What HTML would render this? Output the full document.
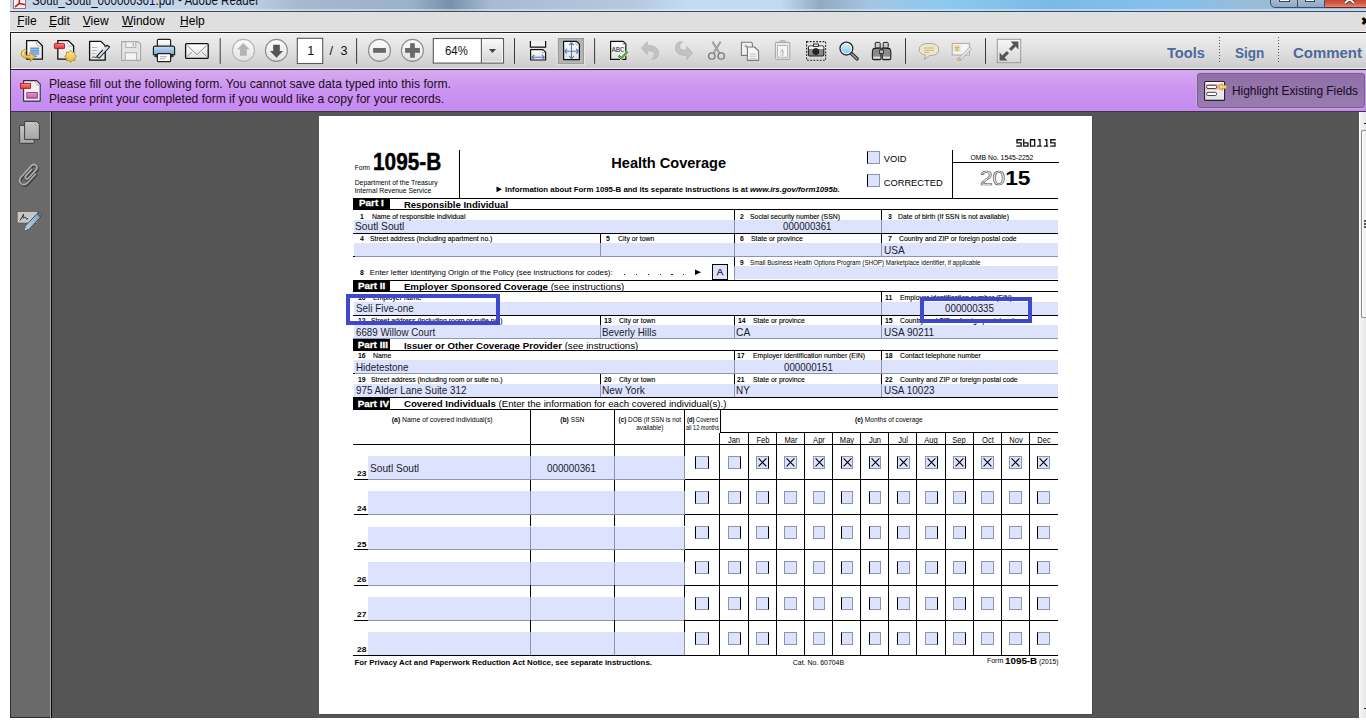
<!DOCTYPE html>
<html><head><meta charset="utf-8"><title>Adobe Reader</title>
<style>
html,body{margin:0;padding:0;width:1366px;height:728px;overflow:hidden;background:#fff;}
body{position:relative;font-family:"Liberation Sans",sans-serif;}
div{position:absolute;box-sizing:border-box;}
.t{white-space:nowrap;}
</style></head><body>
<div style="left:10.00px;top:0.00px;width:1356.00px;height:11.00px;background:linear-gradient(90deg,#c6d6e6 0px,#c4d4e4 230px,#a4b8ce 290px,#9cb2ca 400px,#7890ac 440px,#a6bad2 480px,#b4c8de 620px,#c4dcf2 680px,#c2daf0 770px,#94aac2 810px,#a4c4e2 860px,#8ccaee 930px,#7cbae6 1040px,#84c0ea 1160px,#98bcd8 1240px,#a0c0dc 1356px);"></div>
<div style="left:10.00px;top:9.00px;width:1356.00px;height:2.00px;background:rgba(225,240,252,0.55);"></div>
<div style="left:10.00px;top:11.00px;width:1356.00px;height:1.00px;background:#3b4a5c;"></div>
<div style="left:13.00px;top:0.00px;width:12.80px;height:8.80px;background:#f6f6f6;border:1px solid #a46a76;border-top:none;"></div>
<svg style="position:absolute;left:13px;top:0px;" width="13" height="9" viewBox="0 0 13 9"><path d="M6.5 -1 Q6.2 2.5 6.3 3.4 Q4 5.2 2.4 6.6 M6.3 3.4 Q9 3.8 11.4 4.4" stroke="#c8101a" stroke-width="1.5" fill="none" stroke-linecap="round"/></svg>
<div class="t" style="left:31.50px;top:-7.75px;font-size:15px;line-height:15px;font-weight:normal;font-style:normal;color:#0a1530;font-family:'Liberation Sans',sans-serif;transform:scaleX(0.7710);transform-origin:left top;">Soutl_Soutl_000000361.pdf - Adobe Reader</div>
<div style="left:1270.00px;top:-3.00px;width:28.40px;height:10.60px;background:linear-gradient(#a8bed4,#8eaac6);border:1px solid #3e4e60;border-radius:0 0 0 5px;"></div>
<div style="left:1298.40px;top:-3.00px;width:26.60px;height:10.60px;background:linear-gradient(#a8bed4,#8eaac6);border:1px solid #3e4e60;border-left:none;"></div>
<div style="left:1325.00px;top:-3.00px;width:45.00px;height:10.60px;background:linear-gradient(#c03828,#d45a44 60%,#e08a78);border:1px solid #6a2218;border-left:none;"></div>
<div style="left:1279.40px;top:-2.00px;width:10.80px;height:4.40px;background:#f4f4f4;border:1px solid #3a4450;"></div>
<div style="left:1305.20px;top:-2.00px;width:9.60px;height:4.20px;background:#f4f4f4;border:1px solid #3a4450;"></div>
<svg style="position:absolute;left:1344px;top:0px;" width="12" height="7" viewBox="0 0 12 7"><path d="M1 -5 L10 3 M10 -5 L1 3" stroke="#40302a" stroke-width="3.6"/><path d="M1 -5 L10 3 M10 -5 L1 3" stroke="#fff" stroke-width="2"/></svg>
<div style="left:10.00px;top:12.00px;width:1356.00px;height:20.00px;background:#dfdfdf;"></div>
<div class="t" style="left:17.30px;top:14.60px;font-size:12px;line-height:12px;font-weight:normal;font-style:normal;color:#000;font-family:'Liberation Sans',sans-serif;">File</div>
<div class="t" style="left:49.20px;top:14.60px;font-size:12px;line-height:12px;font-weight:normal;font-style:normal;color:#000;font-family:'Liberation Sans',sans-serif;">Edit</div>
<div class="t" style="left:82.80px;top:14.60px;font-size:12px;line-height:12px;font-weight:normal;font-style:normal;color:#000;font-family:'Liberation Sans',sans-serif;">View</div>
<div class="t" style="left:121.90px;top:14.60px;font-size:12px;line-height:12px;font-weight:normal;font-style:normal;color:#000;font-family:'Liberation Sans',sans-serif;">Window</div>
<div class="t" style="left:180.10px;top:14.60px;font-size:12px;line-height:12px;font-weight:normal;font-style:normal;color:#000;font-family:'Liberation Sans',sans-serif;">Help</div>
<div style="left:17.30px;top:25.80px;width:6.50px;height:1.00px;background:#000;"></div>
<div style="left:49.20px;top:25.80px;width:7.00px;height:1.00px;background:#000;"></div>
<div style="left:82.80px;top:25.80px;width:7.50px;height:1.00px;background:#000;"></div>
<div style="left:121.90px;top:25.80px;width:11.00px;height:1.00px;background:#000;"></div>
<div style="left:180.10px;top:25.80px;width:8.00px;height:1.00px;background:#000;"></div>
<div class="t" style="left:1360.50px;top:15.65px;font-size:11px;line-height:11px;font-weight:bold;font-style:normal;color:#000;font-family:'Liberation Sans',sans-serif;">&#10006;</div>
<div style="left:10.00px;top:31.00px;width:1356.00px;height:1.00px;background:#f4f4f4;"></div>
<div style="left:10.00px;top:32.00px;width:1356.00px;height:1.00px;background:#202020;"></div>
<div style="left:10.00px;top:33.00px;width:1356.00px;height:1.00px;background:#fbfbfb;"></div>
<div style="left:10.00px;top:34.00px;width:1356.00px;height:34.00px;background:linear-gradient(#eeeeee 0%,#e2e2e2 45%,#cdcdcd 100%);"></div>
<div style="left:10.00px;top:68.00px;width:1356.00px;height:1.00px;background:#f2f2f2;"></div>
<div style="left:10.00px;top:32.00px;width:1.00px;height:37.00px;background:#202020;"></div>
<div style="left:10.00px;top:69.00px;width:1356.00px;height:1.00px;background:#202020;"></div>
<div style="left:10.00px;top:70.00px;width:1356.00px;height:41.00px;background:linear-gradient(#d7a9ef 0%,#cb93f1 50%,#c58af2 100%);"></div>
<div style="left:10.00px;top:70.00px;width:1.00px;height:41.00px;background:#3a3a3a;"></div>
<div style="left:10.00px;top:111.00px;width:1356.00px;height:1.00px;background:#3e3a40;"></div>
<div style="left:10.00px;top:112.00px;width:41.00px;height:606.00px;background:#6a6a6a;border-left:1px solid #2e2e2e;border-bottom:1px solid #2e2e2e;"></div>
<div style="left:50.00px;top:112.00px;width:1.00px;height:606.00px;background:#a4a4a4;"></div>
<div style="left:51.00px;top:112.00px;width:1.00px;height:606.00px;background:#0a0a0a;"></div>
<div style="left:52.00px;top:112.00px;width:1307.00px;height:606.00px;background:#555555;"></div>
<div style="left:52.00px;top:717.00px;width:1307.00px;height:1.00px;background:#505050;"></div>
<div style="left:319.00px;top:116.00px;width:773.00px;height:598.00px;background:#ffffff;"></div>
<div style="left:1092.00px;top:117.00px;width:1.00px;height:598.00px;background:#4a4a4a;"></div>
<div style="left:320.00px;top:714.00px;width:773.00px;height:1.00px;background:#4a4a4a;"></div>
<div style="left:1359.00px;top:112.00px;width:7.00px;height:606.00px;background:linear-gradient(90deg,#f4f4f4,#e8e8e8);border-left:1px solid #ffffff;"></div>
<div style="left:1361.00px;top:130.00px;width:5.00px;height:188.00px;background:linear-gradient(90deg,#fdfdfd,#ececec);border:1px solid #8c8c8c;border-right:none;border-radius:2px 0 0 2px;"></div>
<div style="left:1364.00px;top:123.00px;width:2.00px;height:1.00px;background:#222;"></div>
<div style="left:1364.00px;top:708.00px;width:2.00px;height:1.00px;background:#222;"></div>
<div style="left:1363.80px;top:220.20px;width:2.20px;height:1.60px;background:#505050;"></div>
<div style="left:1363.80px;top:223.20px;width:2.20px;height:1.60px;background:#505050;"></div>
<div style="left:1363.80px;top:226.20px;width:2.20px;height:1.60px;background:#505050;"></div>
<svg style="position:absolute;left:0px;top:70px;" width="60" height="42" viewBox="0 0 60 42"><defs><linearGradient id="gr2" x1="0" y1="0" x2="0" y2="1"><stop offset="0" stop-color="#ff8a8a"/><stop offset="1" stop-color="#e23a3a"/></linearGradient>
<linearGradient id="gm2" x1="0" y1="0" x2="0" y2="1"><stop offset="0" stop-color="#e89ad6"/><stop offset="1" stop-color="#c65aae"/></linearGradient></defs>
<path d="M23.6 10.6 H36.6 L40.2 14.2 V31.1 H23.6 Z" fill="#f2f2f2" stroke="#35283f" stroke-width="1.1" stroke-linejoin="round"/>
<path d="M35.4 11.4 Q36 14 37 14.6 Q38.6 15.2 39.6 15.2" fill="none" stroke="#999" stroke-width="0.8"/>
<rect x="20.6" y="13.4" width="9.8" height="5" fill="url(#gr2)" stroke="#b01818" stroke-width="0.9"/>
<rect x="26.8" y="22.6" width="10.6" height="5.6" fill="url(#gm2)" stroke="#943476" stroke-width="0.9"/></svg>
<div class="t" style="left:49.00px;top:78.12px;font-size:12.1px;line-height:12.1px;font-weight:normal;font-style:normal;color:#1c0c24;font-family:'Liberation Sans',sans-serif;transform:scaleX(1.0016);transform-origin:left top;">Please fill out the following form. You cannot save data typed into this form.</div>
<div class="t" style="left:49.00px;top:92.72px;font-size:12.1px;line-height:12.1px;font-weight:normal;font-style:normal;color:#1c0c24;font-family:'Liberation Sans',sans-serif;transform:scaleX(0.9960);transform-origin:left top;">Please print your completed form if you would like a copy for your records.</div>
<div style="left:1196.30px;top:72.30px;width:169.70px;height:37.20px;background:linear-gradient(#8e6fa6,#9a7cb2);border:1px solid #c9a8e0;border-radius:4px;box-shadow:inset 0 0 0 1px #7c5c96;"></div>
<svg style="position:absolute;left:1200px;top:78px;" width="32" height="26" viewBox="0 0 32 26"><defs><linearGradient id="gh" x1="0" y1="0" x2="0" y2="1"><stop offset="0" stop-color="#fafafa"/><stop offset="1" stop-color="#e2e2e2"/></linearGradient>
<linearGradient id="ggold2" x1="0" y1="0" x2="0" y2="1"><stop offset="0" stop-color="#fff4b0"/><stop offset="1" stop-color="#e8b83a"/></linearGradient></defs>
<rect x="4.6" y="3.5" width="20" height="18.9" rx="1" fill="url(#gh)" stroke="#2a2030" stroke-width="1.1"/>
<rect x="5.2" y="6" width="17.2" height="5.8" fill="#f4b4b4"/>
<rect x="6.6" y="7.3" width="10" height="3.2" rx="1.4" fill="#fff" stroke="#333" stroke-width="0.9"/>
<rect x="6.6" y="14.3" width="10" height="3.2" rx="1.4" fill="#fff" stroke="#333" stroke-width="0.9"/>
<path d="M18.4 8.9 L22.2 5.4 V7.4 H26.6 V10.6 H22.2 V12.6 Z" fill="url(#ggold2)" stroke="#c08a20" stroke-width="0.8" stroke-linejoin="round"/></svg>
<div class="t" style="left:1231.60px;top:84.72px;font-size:12.1px;line-height:12.1px;font-weight:normal;font-style:normal;color:#140a1c;font-family:'Liberation Sans',sans-serif;transform:scaleX(0.9814);transform-origin:left top;">Highlight Existing Fields</div>
<svg style="position:absolute;left:10px;top:112px;" width="41" height="120" viewBox="0 0 41 120"><defs><linearGradient id="gn" x1="0" y1="0" x2="0" y2="1"><stop offset="0" stop-color="#c4c4c4"/><stop offset="1" stop-color="#a6a6a6"/></linearGradient>
<linearGradient id="gpen" x1="0" y1="0" x2="1" y2="0"><stop offset="0" stop-color="#bcd4e4"/><stop offset="1" stop-color="#7e9eb6"/></linearGradient></defs>
<rect x="9.6" y="13.4" width="14.6" height="18" rx="0.8" fill="url(#gn)" stroke="#3e3e3e" stroke-width="1"/>
<path d="M14.6 9.4 H26.4 L29.4 12.4 V27.4 H14.6 Z" fill="url(#gn)" stroke="#3e3e3e" stroke-width="1" stroke-linejoin="round"/>
<path d="M25.8 9.8 V13 H29" fill="#ddd" stroke="#888" stroke-width="0.6"/>
<g transform="translate(14.6,69.3) rotate(-47.6)"><path d="M12.5 4.3 L0 4.3 A4.3 4.3 0 0 1 0 -4.3 L16 -4.3 A3.1 3.1 0 0 1 16 1.9 L4.6 1.9 A1.8 1.8 0 0 1 4.6 -1.7 L13.4 -1.7" fill="none" stroke="#333" stroke-width="2.6" stroke-linecap="round" stroke-linejoin="round" opacity="0.8"/></g><g transform="translate(13.9,68.4) rotate(-47.6)"><path d="M12.5 4.3 L0 4.3 A4.3 4.3 0 0 1 0 -4.3 L16 -4.3 A3.1 3.1 0 0 1 16 1.9 L4.6 1.9 A1.8 1.8 0 0 1 4.6 -1.7 L13.4 -1.7" fill="none" stroke="#ababab" stroke-width="1.7" stroke-linecap="round" stroke-linejoin="round"/></g>
<rect x="7.2" y="99.6" width="20.4" height="11.4" fill="#c6c6c6" stroke="#555" stroke-width="0.6"/>
<path d="M10 108.4 Q12 106 13.4 102.6 Q14 101 13.2 103.6 Q12.4 107.4 14.6 105.4 Q15.6 104.4 16 106.4 Q16.4 107.6 18 106.6" fill="none" stroke="#222" stroke-width="1"/>
<path d="M14.8 114.6 L27.2 101.6 L30.8 105 L18.4 118 Z" fill="url(#gpen)" stroke="#3a4a5a" stroke-width="0.9"/>
<path d="M27.6 102.2 L29.4 100.2 L32.2 102.8 L30.4 104.8 Z" fill="#5a7a9a" stroke="#3a4a5a" stroke-width="0.8"/>
<path d="M15.4 115 L14.2 118.6 L18.2 117.4" fill="#eee" stroke="#555" stroke-width="0.7"/></svg>
<svg style="position:absolute;left:0;top:0" width="1366" height="70" viewBox="0 0 1366 70"><defs>
<linearGradient id="gPage" x1="0" y1="0" x2="0" y2="1"><stop offset="0" stop-color="#ffffff"/><stop offset="1" stop-color="#e2e2e2"/></linearGradient>
<linearGradient id="gCirc" x1="0" y1="0" x2="0" y2="1"><stop offset="0" stop-color="#fdfdfd"/><stop offset="1" stop-color="#e0e0e0"/></linearGradient>
<linearGradient id="gGold" x1="0" y1="0" x2="0" y2="1"><stop offset="0" stop-color="#fff0a0"/><stop offset="1" stop-color="#e0b030"/></linearGradient>
<linearGradient id="gRed" x1="0" y1="0" x2="0" y2="1"><stop offset="0" stop-color="#ff8080"/><stop offset="1" stop-color="#e03030"/></linearGradient>
<linearGradient id="gBlueP" x1="0" y1="0" x2="0" y2="1"><stop offset="0" stop-color="#c8def2"/><stop offset="1" stop-color="#7aa6d6"/></linearGradient>
<linearGradient id="gBtn" x1="0" y1="0" x2="0" y2="1"><stop offset="0" stop-color="#f8f8f8"/><stop offset="1" stop-color="#d6d6d6"/></linearGradient>
<linearGradient id="gLens" x1="0" y1="0" x2="0" y2="1"><stop offset="0" stop-color="#e6f6fb"/><stop offset="1" stop-color="#78c8e6"/></linearGradient>
</defs><path d="M26.6 40.6 H37.2 L42.4 45.8 V59.2 H26.6 Z" fill="url(#gPage)" stroke="#111" stroke-width="1.3" stroke-linejoin="round"/><path d="M35.8 41.5 Q36.5 45 37.5 45.5 Q40 46.5 41.6 46.5" fill="none" stroke="#aaa" stroke-width="0.9"/><line x1="30.2" y1="48.2" x2="39.2" y2="48.2" stroke="#2a78d6" stroke-width="1.1"/><line x1="30.2" y1="50.1" x2="39.2" y2="50.1" stroke="#2a78d6" stroke-width="1.1"/><line x1="30.2" y1="52.0" x2="39.2" y2="52.0" stroke="#2a78d6" stroke-width="1.1"/><line x1="30.2" y1="54.0" x2="39.2" y2="54.0" stroke="#2a78d6" stroke-width="1.1"/><line x1="33" y1="56.2" x2="37" y2="56.2" stroke="#2a78d6" stroke-width="1.1"/><path d="M25.2 49.2 Q20.5 51 21 54.5 Q22 58.5 30 58.2 L30.4 61.5 L35 56.4 L29.6 52.6 L29.8 55.6 Q24.8 55.8 24.6 53.4 Q24.8 51.6 26.4 50.6 Z" fill="url(#gGold)" stroke="#b8862a" stroke-width="0.9" stroke-linejoin="round"/><path d="M57.8 40.6 H68.4 L73.6 45.8 V59.2 H57.8 Z" fill="url(#gPage)" stroke="#111" stroke-width="1.3" stroke-linejoin="round"/><path d="M67 41.5 Q67.7 45 68.7 45.5 Q71.2 46.5 72.8 46.5" fill="none" stroke="#aaa" stroke-width="0.9"/><rect x="54.4" y="43.4" width="10.2" height="5.2" rx="0.8" fill="url(#gRed)" stroke="#9a1a1a" stroke-width="0.9"/><polygon points="70.60,50.20 72.21,52.52 74.98,52.02 74.48,54.79 76.80,56.40 74.48,58.01 74.98,60.78 72.21,60.28 70.60,62.60 68.99,60.28 66.22,60.78 66.72,58.01 64.40,56.40 66.72,54.79 66.22,52.02 68.99,52.52" fill="url(#gGold)" stroke="#b8862a" stroke-width="0.8"/><path d="M89.6 41.4 H101 L105.2 45.6 V60.2 H89.6 Z" fill="url(#gPage)" stroke="#111" stroke-width="1.3" stroke-linejoin="round"/><line x1="92" y1="47.5" x2="97.5" y2="47.5" stroke="#aaa" stroke-width="0.8"/><line x1="92" y1="50.5" x2="97.5" y2="50.5" stroke="#aaa" stroke-width="0.8"/><line x1="92" y1="53.5" x2="95.5" y2="53.5" stroke="#aaa" stroke-width="0.8"/><path d="M92 57.6 Q94 56 95 57.4 Q97 57.8 98 57" fill="none" stroke="#333" stroke-width="0.8"/><path d="M98.2 57.4 L96.8 56.4 L107.2 45.2 L109.6 47 L99.4 58 Z" fill="#cfe2f4" stroke="#1a1a1a" stroke-width="1.1" stroke-linejoin="round"/><line x1="102.8" y1="50" x2="105.6" y2="46.8" stroke="#fff" stroke-width="1.2"/><path d="M121.6 41.6 H138.2 L140.6 44 V60.4 H121.6 Z" fill="#e4e4e4" stroke="#a8a8a8" stroke-width="1.1" stroke-linejoin="round"/><rect x="125.8" y="41.8" width="10" height="5.6" fill="#f2f2f2" stroke="#a8a8a8" stroke-width="0.9"/><rect x="132.6" y="42.6" width="1.4" height="3.8" fill="#b0b0b0"/><rect x="125.2" y="52.8" width="11.4" height="7.4" fill="#f4f4f4" stroke="#aaa" stroke-width="0.9"/><rect x="157.4" y="39.4" width="13.2" height="8.6" rx="1" fill="url(#gPage)" stroke="#222" stroke-width="1.2"/><path d="M155.2 46.2 H172.8 Q174.6 46.2 174.6 48 V54.6 H153.4 V48 Q153.4 46.2 155.2 46.2 Z" fill="url(#gBlueP)" stroke="#222" stroke-width="1.2"/><rect x="154.4" y="54.4" width="19.2" height="2.8" rx="0.8" fill="#333"/><rect x="157.4" y="53.6" width="13.2" height="8" rx="0.8" fill="#fdfdfd" stroke="#222" stroke-width="1.2"/><line x1="160" y1="56.6" x2="167" y2="56.6" stroke="#999" stroke-width="0.8"/><line x1="160" y1="58.6" x2="165.4" y2="58.6" stroke="#999" stroke-width="0.8"/><rect x="185.6" y="43.6" width="22.6" height="14.8" rx="1" fill="url(#gPage)" stroke="#111" stroke-width="1.3"/><path d="M187.2 45.6 L197 54.6 L206.6 45.6 M187.2 56.4 L191.8 52.2 M206.6 56.4 L202 52.2" fill="none" stroke="#777" stroke-width="0.8"/><line x1="220.2" y1="38.2" x2="220.2" y2="63.8" stroke="#3a3a3a" stroke-width="1"/><line x1="356.6" y1="38.2" x2="356.6" y2="63.8" stroke="#3a3a3a" stroke-width="1"/><line x1="514.5" y1="38.2" x2="514.5" y2="63.8" stroke="#3a3a3a" stroke-width="1"/><line x1="594.6" y1="38.2" x2="594.6" y2="63.8" stroke="#3a3a3a" stroke-width="1"/><line x1="905.5" y1="38.2" x2="905.5" y2="63.8" stroke="#3a3a3a" stroke-width="1"/><line x1="985.5" y1="38.2" x2="985.5" y2="63.8" stroke="#3a3a3a" stroke-width="1"/><circle cx="243.5" cy="50.4" r="11" fill="url(#gCirc)" stroke="#b4b4b4" stroke-width="1.1"/><path d="M243.3 43 L249.8 49.6 H246.8 V55.8 H240 V49.6 H237 Z" fill="#b4b4b4"/><circle cx="276.4" cy="50.4" r="11" fill="url(#gCirc)" stroke="#8c8c8c" stroke-width="1.1"/><path d="M273.2 44.8 H279.8 V51.1 H283 L276.5 57.8 L269.9 51.1 H273.2 Z" fill="#555"/><rect x="297.3" y="38.3" width="25.4" height="25.2" fill="#fff" stroke="#5a5a5a" stroke-width="1.1"/><circle cx="379.5" cy="50.4" r="11" fill="url(#gCirc)" stroke="#8c8c8c" stroke-width="1.1"/><rect x="373.1" y="48" width="12.8" height="4.8" fill="#686868"/><circle cx="412.4" cy="50.4" r="11" fill="url(#gCirc)" stroke="#8c8c8c" stroke-width="1.1"/><rect x="405.1" y="48" width="14.8" height="4.8" fill="#686868"/><rect x="410.1" y="43.2" width="4.7" height="14.5" fill="#686868"/><rect x="433.3" y="38.5" width="70.2" height="24.6" fill="#fff" stroke="#5a5a5a" stroke-width="1.1"/><rect x="482.2" y="40" width="19.8" height="21.6" fill="url(#gBtn)"/><line x1="481.4" y1="38.5" x2="481.4" y2="63.1" stroke="#5a5a5a" stroke-width="1.1"/><path d="M488.9 49.1 H496.1 L492.5 53 Z" fill="#444"/><path d="M530.4 40.9 V47.2 H545.6 V40.9" fill="#f2f2f2" stroke="#111" stroke-width="1.2"/><path d="M530.6 49.6 H543 L545.6 52.2 V60 H530.6 Z" fill="url(#gPage)" stroke="#111" stroke-width="1.2" stroke-linejoin="round"/><path d="M542.2 50 V52.8 H545" fill="none" stroke="#999" stroke-width="0.7"/><path d="M531.6 57.3 H544.6 M531.6 57.3 L534.4 55 M531.6 57.3 L534.4 59.6 M544.6 57.3 L541.8 55 M544.6 57.3 L541.8 59.6" fill="none" stroke="#5a78b8" stroke-width="1.1"/><rect x="558" y="38.2" width="25.8" height="25.8" fill="#b4b4b4" stroke="#8a8a8a" stroke-width="1"/><rect x="557.2" y="37.4" width="27.4" height="27.4" fill="none" stroke="#fafafa" stroke-width="0.7"/><path d="M563.6 41.4 H576.6 L579.4 44.2 V59.6 H563.6 Z" fill="url(#gPage)" stroke="#111" stroke-width="1.2" stroke-linejoin="round"/><path d="M576 41.8 V44.8 H579" fill="none" stroke="#999" stroke-width="0.7"/><path d="M571.5 42.6 V58.6 M564.6 51.3 H578.6 M571.5 42.6 L569.2 45 M571.5 42.6 L573.8 45 M571.5 58.6 L569.2 56.2 M571.5 58.6 L573.8 56.2 M564.6 51.3 L567 49 M564.6 51.3 L567 53.6 M578.6 51.3 L576.2 49 M578.6 51.3 L576.2 53.6" fill="none" stroke="#5a78b8" stroke-width="1.1"/><path d="M610.6 41.4 H623.2 L625.8 44 V59.4 H610.6 Z" fill="url(#gPage)" stroke="#111" stroke-width="1.2" stroke-linejoin="round"/><path d="M623 41.8 V44.4 H625.6" fill="none" stroke="#999" stroke-width="0.7"/><text x="611.4" y="51.9" font-family="Liberation Mono" font-size="6.8" fill="#333" letter-spacing="-0.2" textLength="12.8" lengthAdjust="spacingAndGlyphs">ABC</text><path d="M618.6 55.6 L621.2 58.2 L627.6 51.8" fill="none" stroke="#fff" stroke-width="3.2"/><path d="M618.6 55.6 L621.2 58.2 L627.6 51.8" fill="none" stroke="#2f7a1c" stroke-width="2.2"/><path d="M618.6 55.6 L621.2 58.2 L627.6 51.8" fill="none" stroke="#9ee070" stroke-width="0.8"/><path d="M641.4 48.2 L647.2 41.6 V45.4 Q658.6 45.4 658.6 53 Q658.4 59.4 651.6 59.4 Q655.2 56.8 654.4 53 Q653.4 50.6 647.2 50.8 V54.6 Z" fill="#c2c2c2" stroke="#b0b0b0" stroke-width="0.7" stroke-linejoin="round"/><g transform="translate(684,50.5) rotate(180) translate(-650,-50.5)"><path d="M641.4 48.2 L647.2 41.6 V45.4 Q658.6 45.4 658.6 53 Q658.4 59.4 651.6 59.4 Q655.2 56.8 654.4 53 Q653.4 50.6 647.2 50.8 V54.6 Z" fill="#c2c2c2" stroke="#b0b0b0" stroke-width="0.7" stroke-linejoin="round"/></g><circle cx="711.8" cy="56" r="3.2" fill="none" stroke="#777" stroke-width="1.3"/><circle cx="721.2" cy="56" r="3.2" fill="none" stroke="#777" stroke-width="1.3"/><path d="M713.4 53.2 L720.6 41.8 M719.6 53.2 L712.4 41.8" fill="none" stroke="#777" stroke-width="1.6"/><path d="M713.4 53.2 L720.6 41.8 M719.6 53.2 L712.4 41.8" fill="none" stroke="#e8e8e8" stroke-width="0.5"/><path d="M741.4 42.2 H751.2 L752.4 43.4 V55.4 H741.4 Z" fill="#f2f2f2" stroke="#7a7a7a" stroke-width="1.1"/><path d="M747.4 47 H754.6 L758.6 51 V60.4 H747.4 Z" fill="#f6f6f6" stroke="#7a7a7a" stroke-width="1.1" stroke-linejoin="round"/><path d="M749.6 54 H756.4 M749.6 56.2 H756.4 M749.6 58.4 H756.4" stroke="#aaa" stroke-width="0.7"/><path d="M744.2 46 L746 44.4 L748 46.4 L746.8 48.6 Z" fill="#aaa"/><rect x="775.4" y="42.4" width="14.4" height="17" rx="1.2" fill="#e8e8e8" stroke="#aaa" stroke-width="1.1"/><rect x="777.6" y="45.6" width="10" height="11.6" fill="#f6f6f6" stroke="#aaa" stroke-width="0.8"/><path d="M779.6 41.4 Q782.6 39.8 785.6 41.4" fill="none" stroke="#aaa" stroke-width="1.1"/><path d="M780 53 L782 50 L784 53 M782.6 49 V54.6 M780 55 H784" fill="none" stroke="#aaa" stroke-width="0.7"/><rect x="806.6" y="41.6" width="19" height="18.6" fill="none" stroke="#222" stroke-width="1.1" stroke-dasharray="1.8 1.4"/><rect x="808.4" y="46" width="15.4" height="10" rx="1.2" fill="#888" stroke="#222" stroke-width="1.1"/><rect x="808.9" y="46.4" width="14.4" height="2.6" fill="#f6f6f6"/><rect x="813.4" y="44" width="5" height="2.4" fill="#eee" stroke="#222" stroke-width="0.9"/><circle cx="815.8" cy="51.6" r="3" fill="#333" stroke="#111" stroke-width="0.9"/><circle cx="815.8" cy="51.6" r="1.2" fill="#111"/><line x1="850.6" y1="52.8" x2="857" y2="58.8" stroke="#222" stroke-width="3.6" stroke-linecap="round"/><line x1="850.6" y1="52.8" x2="857" y2="58.8" stroke="#999" stroke-width="1.6" stroke-linecap="round"/><circle cx="846.4" cy="48.6" r="6.4" fill="url(#gLens)" stroke="#222" stroke-width="1.3"/><circle cx="846.4" cy="48.6" r="5.2" fill="none" stroke="#fff" stroke-width="0.8"/><rect x="875.2" y="42.4" width="5" height="5.6" rx="0.8" fill="#ccc" stroke="#222" stroke-width="1"/><rect x="883.2" y="42.4" width="5" height="5.6" rx="0.8" fill="#ccc" stroke="#222" stroke-width="1"/><path d="M873.4 48.6 Q872.4 50 872.4 52 V58.2 Q872.4 59.6 873.8 59.6 H879.8 Q881 59.6 881 58.2 V48 Z" fill="#8a8a8a" stroke="#222" stroke-width="1.1"/><path d="M889.8 48.6 Q890.8 50 890.8 52 V58.2 Q890.8 59.6 889.4 59.6 H883.4 Q882.2 59.6 882.2 58.2 V48 Z" fill="#8a8a8a" stroke="#222" stroke-width="1.1"/><rect x="879.6" y="50" width="4" height="3.4" fill="#bbb" stroke="#222" stroke-width="0.8"/><rect x="873.2" y="56.6" width="7" height="2" fill="#ddd"/><rect x="883" y="56.6" width="7" height="2" fill="#ddd"/><path d="M929 43.4 Q938.8 43.4 938.8 49.6 Q938.8 55.6 929.4 55.6 L924.6 59.4 L925.4 55.2 Q919.2 54 919.2 49.6 Q919.2 43.4 929 43.4 Z" fill="#efe6c6" stroke="#a8a8a8" stroke-width="1"/><path d="M924 48 H934 M924 50.4 H934 M924 52.6 H929" stroke="#b0a890" stroke-width="0.8"/><rect x="952.2" y="43.4" width="17.2" height="11.6" fill="#f4f4f4" stroke="#a8a8a8" stroke-width="1"/><rect x="953.8" y="45" width="6.6" height="6.6" fill="#efdca0"/><text x="954.8" y="50.6" font-family="Liberation Serif" font-size="7" fill="#888">T</text><path d="M958.4 58.4 L969.6 47 L971.6 49 L960.4 60 Z" fill="#e6e6e6" stroke="#aaa" stroke-width="0.9"/><ellipse cx="959" cy="59.4" rx="1.8" ry="1.2" fill="#e4c4a0" stroke="#c09060" stroke-width="0.6"/><rect x="997.3" y="39.3" width="23.4" height="23.4" fill="url(#gBtn)" stroke="#9a9a9a" stroke-width="1"/><path d="M1018.4 41.6 V49.4 L1015.6 46.6 L1011.2 51 L1009 48.8 L1013.4 44.4 L1010.6 41.6 Z" fill="#555"/><path d="M999.6 60.4 V52.6 L1002.4 55.4 L1006.8 51 L1009 53.2 L1004.6 57.6 L1007.4 60.4 Z" fill="#555"/><line x1="1219.5" y1="37" x2="1219.5" y2="64" stroke="#555" stroke-width="1" stroke-dasharray="1 2"/><line x1="1278.5" y1="37" x2="1278.5" y2="64" stroke="#555" stroke-width="1" stroke-dasharray="1 2"/></svg>
<div class="t" style="left:307.20px;top:45.09px;font-size:12.6px;line-height:12.6px;font-weight:normal;font-style:normal;color:#111;font-family:'Liberation Sans',sans-serif;">1</div>
<div class="t" style="left:329.60px;top:45.09px;font-size:12.6px;line-height:12.6px;font-weight:normal;font-style:normal;color:#111;font-family:'Liberation Sans',sans-serif;">/</div>
<div class="t" style="left:340.60px;top:45.09px;font-size:12.6px;line-height:12.6px;font-weight:normal;font-style:normal;color:#111;font-family:'Liberation Sans',sans-serif;">3</div>
<div class="t" style="left:445.20px;top:45.09px;font-size:12.6px;line-height:12.6px;font-weight:normal;font-style:normal;color:#111;font-family:'Liberation Sans',sans-serif;transform:scaleX(0.9041);transform-origin:left top;">64%</div>
<div class="t" style="left:1167.00px;top:44.88px;font-size:15.2px;line-height:15.2px;font-weight:bold;font-style:normal;color:#4c6a98;font-family:'Liberation Sans',sans-serif;transform:scaleX(0.9651);transform-origin:left top;">Tools</div>
<div class="t" style="left:1234.60px;top:44.88px;font-size:15.2px;line-height:15.2px;font-weight:bold;font-style:normal;color:#4c6a98;font-family:'Liberation Sans',sans-serif;transform:scaleX(0.8904);transform-origin:left top;">Sign</div>
<div class="t" style="left:1293.00px;top:44.88px;font-size:15.2px;line-height:15.2px;font-weight:bold;font-style:normal;color:#4c6a98;font-family:'Liberation Sans',sans-serif;transform:scaleX(0.9851);transform-origin:left top;">Comment</div>
<svg style="position:absolute;left:1016px;top:139px;" width="43" height="9" viewBox="0 0 43 9"><path transform="translate(0.30,0.1)" d="M5.5 0.65 H0.65 V3.85 H4.85 V7.05 H0" fill="none" stroke="#111" stroke-width="1.3"/><path transform="translate(7.07,0.1)" d="M0.65 0 V7.05 H4.85 V3.85 H0.65" fill="none" stroke="#111" stroke-width="1.3"/><path transform="translate(13.84,0.1)" d="M0.65 0.65 H4.85 V7.05 H0.65 Z" fill="none" stroke="#111" stroke-width="1.3"/><path transform="translate(20.61,0.1)" d="M1.6 0.65 H3.4 V7.05 M0.4 7.05 H4.9" fill="none" stroke="#111" stroke-width="1.3"/><path transform="translate(27.38,0.1)" d="M1.6 0.65 H3.4 V7.05 M0.4 7.05 H4.9" fill="none" stroke="#111" stroke-width="1.3"/><path transform="translate(34.15,0.1)" d="M5.5 0.65 H0.65 V3.85 H4.85 V7.05 H0" fill="none" stroke="#111" stroke-width="1.3"/></svg>
<div class="t" style="left:354.70px;top:164.89px;font-size:6.6px;line-height:6.6px;font-weight:normal;font-style:normal;color:#000;font-family:'Liberation Sans',sans-serif;">Form</div>
<div class="t" style="left:373.20px;top:150.84px;font-size:23.6px;line-height:23.6px;font-weight:bold;font-style:normal;color:#000;font-family:'Liberation Sans',sans-serif;transform:scaleX(0.8812);transform-origin:left top;-webkit-text-stroke:0.45px #000;">1095-B</div>
<div class="t" style="left:354.70px;top:179.80px;font-size:6.82px;line-height:6.82px;font-weight:normal;font-style:normal;color:#000;font-family:'Liberation Sans',sans-serif;">Department of the Treasury</div>
<div class="t" style="left:354.70px;top:187.70px;font-size:6.82px;line-height:6.82px;font-weight:normal;font-style:normal;color:#000;font-family:'Liberation Sans',sans-serif;">Internal Revenue Service</div>
<div style="left:458.90px;top:150.00px;width:1.20px;height:48.50px;background:#000;"></div>
<div class="t" style="left:611.30px;top:156.12px;font-size:14.56px;line-height:14.56px;font-weight:bold;font-style:normal;color:#000;font-family:'Liberation Sans',sans-serif;">Health Coverage</div>
<svg style="position:absolute;left:496px;top:186px;" width="7" height="7" viewBox="0 0 7 7"><path d="M0.5 0.5 L6 3.3 L0.5 6.2 Z" fill="#000"/></svg>
<div class="t" style="left:505.10px;top:185.94px;font-size:7.84px;line-height:7.84px;font-weight:bold;font-style:normal;color:#000;font-family:'Liberation Sans',sans-serif;">Information about Form 1095-B and its separate instructions is at <i>www.irs.gov/form1095b.</i></div>
<div style="left:867.00px;top:151.20px;width:13.00px;height:12.80px;background:#dde3fd;border:1px solid #8d93b4;border-left:1.3px solid #000;"></div>
<div class="t" style="left:883.70px;top:154.88px;font-size:9.32px;line-height:9.32px;font-weight:normal;font-style:normal;color:#000;font-family:'Liberation Sans',sans-serif;">VOID</div>
<div style="left:867.00px;top:173.90px;width:13.00px;height:12.80px;background:#dde3fd;border:1px solid #8d93b4;border-left:1.3px solid #000;"></div>
<div class="t" style="left:883.70px;top:178.88px;font-size:9.32px;line-height:9.32px;font-weight:normal;font-style:normal;color:#000;font-family:'Liberation Sans',sans-serif;">CORRECTED</div>
<div style="left:951.90px;top:149.80px;width:1.20px;height:48.70px;background:#000;"></div>
<div style="left:952.50px;top:161.60px;width:106.60px;height:1.20px;background:#000;"></div>
<div class="t" style="left:970.50px;top:154.96px;font-size:6.87px;line-height:6.87px;font-weight:normal;font-style:normal;color:#000;font-family:'Liberation Sans',sans-serif;">OMB No. 1545-2252</div>
<div class="t" style="left:979.50px;top:168.94px;font-size:19.6px;line-height:19.6px;font-weight:bold;font-style:normal;color:#000;font-family:'Liberation Sans',sans-serif;transform:scaleX(1.1584);transform-origin:left top;"><span style="color:#fff;-webkit-text-stroke:0.6px #444;font-weight:normal">20</span>15</div>
<div style="left:353.40px;top:197.60px;width:704.90px;height:1.40px;background:#000;"></div>
<div style="left:353.40px;top:198.30px;width:36.20px;height:11.00px;background:#000;"></div>
<div class="t" style="left:359.00px;top:198.49px;font-size:9.9px;line-height:9.9px;font-weight:bold;font-style:normal;color:#fff;font-family:'Liberation Sans',sans-serif;-webkit-text-stroke:0.3px #fff;">Part I</div>
<div class="t" style="left:403.90px;top:200.17px;font-size:9.57px;line-height:9.57px;font-weight:bold;font-style:normal;color:#000;font-family:'Liberation Sans',sans-serif;">Responsible Individual</div>
<div style="left:353.40px;top:208.70px;width:704.90px;height:1.20px;background:#000;"></div>
<div style="left:354.00px;top:220.20px;width:704.30px;height:12.40px;background:#dde3fd;"></div>
<div class="t" style="left:359.90px;top:212.50px;font-size:7.3px;line-height:7.3px;font-weight:bold;font-style:normal;color:#000;font-family:'Liberation Sans',sans-serif;transform:scaleX(0.9400);transform-origin:left top;">1</div>
<div class="t" style="left:371.60px;top:212.50px;font-size:7.3px;line-height:7.3px;font-weight:normal;font-style:normal;color:#000;font-family:'Liberation Sans',sans-serif;transform:scaleX(0.9400);transform-origin:left top;-webkit-text-stroke:0.12px #000;">Name of responsible individual</div>
<div class="t" style="left:739.80px;top:212.50px;font-size:7.3px;line-height:7.3px;font-weight:bold;font-style:normal;color:#000;font-family:'Liberation Sans',sans-serif;transform:scaleX(0.9400);transform-origin:left top;">2</div>
<div class="t" style="left:749.60px;top:212.50px;font-size:7.3px;line-height:7.3px;font-weight:normal;font-style:normal;color:#000;font-family:'Liberation Sans',sans-serif;transform:scaleX(0.9400);transform-origin:left top;-webkit-text-stroke:0.12px #000;">Social security number (SSN)</div>
<div class="t" style="left:887.90px;top:212.50px;font-size:7.3px;line-height:7.3px;font-weight:bold;font-style:normal;color:#000;font-family:'Liberation Sans',sans-serif;transform:scaleX(0.9400);transform-origin:left top;">3</div>
<div class="t" style="left:897.80px;top:212.50px;font-size:7.3px;line-height:7.3px;font-weight:normal;font-style:normal;color:#000;font-family:'Liberation Sans',sans-serif;transform:scaleX(0.9400);transform-origin:left top;-webkit-text-stroke:0.12px #000;">Date of birth (If SSN is not available)</div>
<div style="left:733.95px;top:209.30px;width:1.10px;height:10.90px;background:#000;"></div>
<div style="left:733.95px;top:220.20px;width:1.10px;height:13.00px;background:#8d93b4;"></div>
<div style="left:880.85px;top:209.30px;width:1.10px;height:10.90px;background:#000;"></div>
<div style="left:880.85px;top:220.20px;width:1.10px;height:13.00px;background:#8d93b4;"></div>
<div class="t" style="left:355.45px;top:221.07px;font-size:10.5px;line-height:10.5px;font-weight:normal;font-style:normal;color:#1a1a2a;font-family:'Liberation Sans',sans-serif;transform:scaleX(0.9725);transform-origin:left top;">Soutl Soutl</div>
<div class="t" style="left:783.40px;top:221.07px;font-size:10.5px;line-height:10.5px;font-weight:normal;font-style:normal;color:#1a1a2a;font-family:'Liberation Sans',sans-serif;transform:scaleX(0.9208);transform-origin:left top;">000000361</div>
<div style="left:353.40px;top:232.70px;width:704.90px;height:1.20px;background:#000;"></div>
<div style="left:354.00px;top:243.00px;width:704.30px;height:13.00px;background:#dde3fd;"></div>
<div class="t" style="left:359.90px;top:235.40px;font-size:7.3px;line-height:7.3px;font-weight:bold;font-style:normal;color:#000;font-family:'Liberation Sans',sans-serif;transform:scaleX(0.9400);transform-origin:left top;">4</div>
<div class="t" style="left:369.80px;top:235.40px;font-size:7.3px;line-height:7.3px;font-weight:normal;font-style:normal;color:#000;font-family:'Liberation Sans',sans-serif;transform:scaleX(0.9400);transform-origin:left top;-webkit-text-stroke:0.12px #000;">Street address (including apartment no.)</div>
<div class="t" style="left:606.30px;top:235.40px;font-size:7.3px;line-height:7.3px;font-weight:bold;font-style:normal;color:#000;font-family:'Liberation Sans',sans-serif;transform:scaleX(0.9400);transform-origin:left top;">5</div>
<div class="t" style="left:617.70px;top:235.40px;font-size:7.3px;line-height:7.3px;font-weight:normal;font-style:normal;color:#000;font-family:'Liberation Sans',sans-serif;transform:scaleX(0.9400);transform-origin:left top;-webkit-text-stroke:0.12px #000;">City or town</div>
<div class="t" style="left:739.80px;top:235.40px;font-size:7.3px;line-height:7.3px;font-weight:bold;font-style:normal;color:#000;font-family:'Liberation Sans',sans-serif;transform:scaleX(0.9400);transform-origin:left top;">6</div>
<div class="t" style="left:751.40px;top:235.40px;font-size:7.3px;line-height:7.3px;font-weight:normal;font-style:normal;color:#000;font-family:'Liberation Sans',sans-serif;transform:scaleX(0.9400);transform-origin:left top;-webkit-text-stroke:0.12px #000;">State or province</div>
<div class="t" style="left:887.90px;top:235.40px;font-size:7.3px;line-height:7.3px;font-weight:bold;font-style:normal;color:#000;font-family:'Liberation Sans',sans-serif;transform:scaleX(0.9400);transform-origin:left top;">7</div>
<div class="t" style="left:899.10px;top:235.40px;font-size:7.3px;line-height:7.3px;font-weight:normal;font-style:normal;color:#000;font-family:'Liberation Sans',sans-serif;transform:scaleX(0.9400);transform-origin:left top;-webkit-text-stroke:0.12px #000;">Country and ZIP or foreign postal code</div>
<div style="left:599.95px;top:233.30px;width:1.10px;height:9.70px;background:#000;"></div>
<div style="left:599.95px;top:243.00px;width:1.10px;height:13.20px;background:#8d93b4;"></div>
<div style="left:733.95px;top:233.30px;width:1.10px;height:9.70px;background:#000;"></div>
<div style="left:733.95px;top:243.00px;width:1.10px;height:13.20px;background:#8d93b4;"></div>
<div style="left:880.85px;top:233.30px;width:1.10px;height:9.70px;background:#000;"></div>
<div style="left:880.85px;top:243.00px;width:1.10px;height:13.20px;background:#8d93b4;"></div>
<div class="t" style="left:883.70px;top:244.88px;font-size:10.5px;line-height:10.5px;font-weight:normal;font-style:normal;color:#1a1a2a;font-family:'Liberation Sans',sans-serif;transform:scaleX(0.9632);transform-origin:left top;">USA</div>
<div style="left:353.40px;top:255.70px;width:704.90px;height:1.20px;background:#8d93b4;"></div>
<div style="left:353.40px;top:255.70px;width:1.50px;height:1.20px;background:#000;"></div>
<div class="t" style="left:359.90px;top:269.40px;font-size:7.3px;line-height:7.3px;font-weight:bold;font-style:normal;color:#000;font-family:'Liberation Sans',sans-serif;transform:scaleX(0.9400);transform-origin:left top;">8</div>
<div class="t" style="left:369.80px;top:268.92px;font-size:7.86px;line-height:7.86px;font-weight:normal;font-style:normal;color:#000;font-family:'Liberation Sans',sans-serif;">Enter letter identifying Origin of the Policy (see instructions for codes):</div>
<div style="left:624.20px;top:273.60px;width:1.20px;height:1.30px;background:#222;"></div>
<div style="left:635.98px;top:273.60px;width:1.20px;height:1.30px;background:#222;"></div>
<div style="left:647.76px;top:273.60px;width:1.20px;height:1.30px;background:#222;"></div>
<div style="left:659.54px;top:273.60px;width:1.20px;height:1.30px;background:#222;"></div>
<div style="left:671.32px;top:273.60px;width:1.20px;height:1.30px;background:#222;"></div>
<div style="left:683.10px;top:273.60px;width:1.20px;height:1.30px;background:#222;"></div>
<svg style="position:absolute;left:694px;top:269px;" width="8" height="7" viewBox="0 0 8 7"><path d="M1 0.6 L7 3.3 L1 6 Z" fill="#000"/></svg>
<div style="left:712.20px;top:264.20px;width:15.50px;height:15.50px;background:#dde3fd;border:1.2px solid #000;"></div>
<div class="t" style="left:420.00px;width:600px;text-align:center;top:267.44px;font-size:9.6px;line-height:9.6px;font-weight:normal;font-style:normal;color:#111;font-family:'Liberation Sans',sans-serif;-webkit-text-stroke:0.25px #111;">A</div>
<div style="left:735.00px;top:266.20px;width:323.30px;height:13.30px;background:#dde3fd;"></div>
<div class="t" style="left:739.80px;top:259.18px;font-size:7.2px;line-height:7.2px;font-weight:bold;font-style:normal;color:#000;font-family:'Liberation Sans',sans-serif;transform:scaleX(0.9000);transform-origin:left top;">9</div>
<div class="t" style="left:750.30px;top:259.18px;font-size:7.2px;line-height:7.2px;font-weight:normal;font-style:normal;color:#000;font-family:'Liberation Sans',sans-serif;transform:scaleX(0.8625);transform-origin:left top;">Small Business Health Options Program (SHOP) Marketplace identifier, if applicable</div>
<div style="left:733.95px;top:257.20px;width:1.10px;height:9.00px;background:#000;"></div>
<div style="left:733.95px;top:266.20px;width:1.10px;height:14.20px;background:#8d93b4;"></div>
<div style="left:353.40px;top:279.80px;width:704.90px;height:1.20px;background:#000;"></div>
<div style="left:353.40px;top:280.40px;width:36.20px;height:11.00px;background:#000;"></div>
<div class="t" style="left:357.90px;top:280.58px;font-size:9.9px;line-height:9.9px;font-weight:bold;font-style:normal;color:#fff;font-family:'Liberation Sans',sans-serif;-webkit-text-stroke:0.3px #fff;">Part II</div>
<div class="t" style="left:403.90px;top:281.87px;font-size:9.68px;line-height:9.68px;font-weight:bold;font-style:normal;color:#000;font-family:'Liberation Sans',sans-serif;">Employer Sponsored Coverage <span style="font-weight:normal">(see instructions)</span></div>
<div style="left:353.40px;top:290.80px;width:704.90px;height:1.20px;background:#000;"></div>
<div style="left:354.00px;top:302.00px;width:704.30px;height:12.60px;background:#dde3fd;"></div>
<div class="t" style="left:357.50px;top:294.20px;font-size:7.3px;line-height:7.3px;font-weight:bold;font-style:normal;color:#000;font-family:'Liberation Sans',sans-serif;transform:scaleX(0.9400);transform-origin:left top;">10</div>
<div class="t" style="left:372.70px;top:294.20px;font-size:7.3px;line-height:7.3px;font-weight:normal;font-style:normal;color:#000;font-family:'Liberation Sans',sans-serif;transform:scaleX(0.9400);transform-origin:left top;-webkit-text-stroke:0.12px #000;">Employer name</div>
<div class="t" style="left:884.60px;top:294.20px;font-size:7.3px;line-height:7.3px;font-weight:bold;font-style:normal;color:#000;font-family:'Liberation Sans',sans-serif;transform:scaleX(0.9400);transform-origin:left top;">11</div>
<div class="t" style="left:899.90px;top:294.20px;font-size:7.3px;line-height:7.3px;font-weight:normal;font-style:normal;color:#000;font-family:'Liberation Sans',sans-serif;transform:scaleX(0.9400);transform-origin:left top;-webkit-text-stroke:0.12px #000;">Employer identification number (EIN)</div>
<div style="left:880.85px;top:291.40px;width:1.10px;height:10.60px;background:#000;"></div>
<div style="left:880.85px;top:302.00px;width:1.10px;height:13.30px;background:#8d93b4;"></div>
<div class="t" style="left:355.70px;top:302.88px;font-size:10.5px;line-height:10.5px;font-weight:normal;font-style:normal;color:#1a1a2a;font-family:'Liberation Sans',sans-serif;transform:scaleX(0.9416);transform-origin:left top;">Seli Five-one</div>
<div class="t" style="left:945.30px;top:302.68px;font-size:10.5px;line-height:10.5px;font-weight:normal;font-style:normal;color:#1a1a2a;font-family:'Liberation Sans',sans-serif;transform:scaleX(0.9322);transform-origin:left top;">000000335</div>
<div style="left:353.40px;top:314.70px;width:704.90px;height:1.20px;background:#000;"></div>
<div style="left:354.00px;top:325.00px;width:704.30px;height:13.20px;background:#dde3fd;"></div>
<div class="t" style="left:357.50px;top:317.40px;font-size:7.3px;line-height:7.3px;font-weight:bold;font-style:normal;color:#000;font-family:'Liberation Sans',sans-serif;transform:scaleX(0.9400);transform-origin:left top;">12</div>
<div class="t" style="left:370.70px;top:317.40px;font-size:7.3px;line-height:7.3px;font-weight:normal;font-style:normal;color:#000;font-family:'Liberation Sans',sans-serif;transform:scaleX(0.9400);transform-origin:left top;-webkit-text-stroke:0.12px #000;">Street address (including room or suite no.)</div>
<div class="t" style="left:603.50px;top:317.40px;font-size:7.3px;line-height:7.3px;font-weight:bold;font-style:normal;color:#000;font-family:'Liberation Sans',sans-serif;transform:scaleX(0.9400);transform-origin:left top;">13</div>
<div class="t" style="left:618.90px;top:317.40px;font-size:7.3px;line-height:7.3px;font-weight:normal;font-style:normal;color:#000;font-family:'Liberation Sans',sans-serif;transform:scaleX(0.9400);transform-origin:left top;-webkit-text-stroke:0.12px #000;">City or town</div>
<div class="t" style="left:737.50px;top:317.40px;font-size:7.3px;line-height:7.3px;font-weight:bold;font-style:normal;color:#000;font-family:'Liberation Sans',sans-serif;transform:scaleX(0.9400);transform-origin:left top;">14</div>
<div class="t" style="left:752.60px;top:317.40px;font-size:7.3px;line-height:7.3px;font-weight:normal;font-style:normal;color:#000;font-family:'Liberation Sans',sans-serif;transform:scaleX(0.9400);transform-origin:left top;-webkit-text-stroke:0.12px #000;">State or province</div>
<div class="t" style="left:884.60px;top:317.40px;font-size:7.3px;line-height:7.3px;font-weight:bold;font-style:normal;color:#000;font-family:'Liberation Sans',sans-serif;transform:scaleX(0.9400);transform-origin:left top;">15</div>
<div class="t" style="left:899.90px;top:317.40px;font-size:7.3px;line-height:7.3px;font-weight:normal;font-style:normal;color:#000;font-family:'Liberation Sans',sans-serif;transform:scaleX(0.9400);transform-origin:left top;-webkit-text-stroke:0.12px #000;">Country and ZIP or foreign postal code</div>
<div style="left:599.85px;top:315.30px;width:1.10px;height:9.70px;background:#000;"></div>
<div style="left:599.85px;top:325.00px;width:1.10px;height:13.40px;background:#8d93b4;"></div>
<div style="left:733.85px;top:315.30px;width:1.10px;height:9.70px;background:#000;"></div>
<div style="left:733.85px;top:325.00px;width:1.10px;height:13.40px;background:#8d93b4;"></div>
<div style="left:880.85px;top:315.30px;width:1.10px;height:9.70px;background:#000;"></div>
<div style="left:880.85px;top:325.00px;width:1.10px;height:13.40px;background:#8d93b4;"></div>
<div class="t" style="left:355.80px;top:326.77px;font-size:10.5px;line-height:10.5px;font-weight:normal;font-style:normal;color:#1a1a2a;font-family:'Liberation Sans',sans-serif;transform:scaleX(0.9284);transform-origin:left top;">6689 Willow Court</div>
<div class="t" style="left:601.90px;top:326.77px;font-size:10.5px;line-height:10.5px;font-weight:normal;font-style:normal;color:#1a1a2a;font-family:'Liberation Sans',sans-serif;transform:scaleX(0.9417);transform-origin:left top;">Beverly Hills</div>
<div class="t" style="left:735.60px;top:326.77px;font-size:10.5px;line-height:10.5px;font-weight:normal;font-style:normal;color:#1a1a2a;font-family:'Liberation Sans',sans-serif;transform:scaleX(0.9730);transform-origin:left top;">CA</div>
<div class="t" style="left:883.70px;top:326.77px;font-size:10.5px;line-height:10.5px;font-weight:normal;font-style:normal;color:#1a1a2a;font-family:'Liberation Sans',sans-serif;transform:scaleX(0.9568);transform-origin:left top;">USA 90211</div>
<div style="left:353.40px;top:337.90px;width:704.90px;height:1.20px;background:#8d93b4;"></div>
<div style="left:353.40px;top:338.70px;width:36.20px;height:11.70px;background:#000;"></div>
<div class="t" style="left:357.70px;top:339.58px;font-size:9.9px;line-height:9.9px;font-weight:bold;font-style:normal;color:#fff;font-family:'Liberation Sans',sans-serif;-webkit-text-stroke:0.3px #fff;">Part III</div>
<div class="t" style="left:403.90px;top:340.77px;font-size:9.68px;line-height:9.68px;font-weight:bold;font-style:normal;color:#000;font-family:'Liberation Sans',sans-serif;">Issuer or Other Coverage Provider <span style="font-weight:normal">(see instructions)</span></div>
<div style="left:353.40px;top:349.80px;width:704.90px;height:1.20px;background:#000;"></div>
<div style="left:354.00px;top:360.00px;width:704.30px;height:13.20px;background:#dde3fd;"></div>
<div class="t" style="left:357.50px;top:352.30px;font-size:7.3px;line-height:7.3px;font-weight:bold;font-style:normal;color:#000;font-family:'Liberation Sans',sans-serif;transform:scaleX(0.9400);transform-origin:left top;">16</div>
<div class="t" style="left:372.70px;top:352.30px;font-size:7.3px;line-height:7.3px;font-weight:normal;font-style:normal;color:#000;font-family:'Liberation Sans',sans-serif;transform:scaleX(0.9400);transform-origin:left top;-webkit-text-stroke:0.12px #000;">Name</div>
<div class="t" style="left:737.30px;top:352.30px;font-size:7.3px;line-height:7.3px;font-weight:bold;font-style:normal;color:#000;font-family:'Liberation Sans',sans-serif;transform:scaleX(0.9400);transform-origin:left top;">17</div>
<div class="t" style="left:752.60px;top:352.30px;font-size:7.3px;line-height:7.3px;font-weight:normal;font-style:normal;color:#000;font-family:'Liberation Sans',sans-serif;transform:scaleX(0.9400);transform-origin:left top;-webkit-text-stroke:0.12px #000;">Employer identification number (EIN)</div>
<div class="t" style="left:884.60px;top:352.30px;font-size:7.3px;line-height:7.3px;font-weight:bold;font-style:normal;color:#000;font-family:'Liberation Sans',sans-serif;transform:scaleX(0.9400);transform-origin:left top;">18</div>
<div class="t" style="left:900.00px;top:352.30px;font-size:7.3px;line-height:7.3px;font-weight:normal;font-style:normal;color:#000;font-family:'Liberation Sans',sans-serif;transform:scaleX(0.9400);transform-origin:left top;-webkit-text-stroke:0.12px #000;">Contact telephone number</div>
<div style="left:733.85px;top:350.40px;width:1.10px;height:9.60px;background:#000;"></div>
<div style="left:733.85px;top:360.00px;width:1.10px;height:13.50px;background:#8d93b4;"></div>
<div style="left:880.85px;top:350.40px;width:1.10px;height:9.60px;background:#000;"></div>
<div style="left:880.85px;top:360.00px;width:1.10px;height:13.50px;background:#8d93b4;"></div>
<div class="t" style="left:356.00px;top:361.68px;font-size:10.5px;line-height:10.5px;font-weight:normal;font-style:normal;color:#1a1a2a;font-family:'Liberation Sans',sans-serif;transform:scaleX(0.9367);transform-origin:left top;">Hidetestone</div>
<div class="t" style="left:783.50px;top:362.07px;font-size:10.5px;line-height:10.5px;font-weight:normal;font-style:normal;color:#1a1a2a;font-family:'Liberation Sans',sans-serif;transform:scaleX(0.9303);transform-origin:left top;">000000151</div>
<div style="left:353.40px;top:373.00px;width:704.90px;height:1.20px;background:#8d93b4;"></div>
<div style="left:353.40px;top:373.00px;width:1.50px;height:1.20px;background:#000;"></div>
<div style="left:354.00px;top:384.00px;width:704.30px;height:12.60px;background:#dde3fd;"></div>
<div class="t" style="left:357.50px;top:376.00px;font-size:7.3px;line-height:7.3px;font-weight:bold;font-style:normal;color:#000;font-family:'Liberation Sans',sans-serif;transform:scaleX(0.9400);transform-origin:left top;">19</div>
<div class="t" style="left:370.70px;top:376.00px;font-size:7.3px;line-height:7.3px;font-weight:normal;font-style:normal;color:#000;font-family:'Liberation Sans',sans-serif;transform:scaleX(0.9400);transform-origin:left top;-webkit-text-stroke:0.12px #000;">Street address (including room or suite no.)</div>
<div class="t" style="left:603.50px;top:376.00px;font-size:7.3px;line-height:7.3px;font-weight:bold;font-style:normal;color:#000;font-family:'Liberation Sans',sans-serif;transform:scaleX(0.9400);transform-origin:left top;">20</div>
<div class="t" style="left:618.90px;top:376.00px;font-size:7.3px;line-height:7.3px;font-weight:normal;font-style:normal;color:#000;font-family:'Liberation Sans',sans-serif;transform:scaleX(0.9400);transform-origin:left top;-webkit-text-stroke:0.12px #000;">City or town</div>
<div class="t" style="left:737.30px;top:376.00px;font-size:7.3px;line-height:7.3px;font-weight:bold;font-style:normal;color:#000;font-family:'Liberation Sans',sans-serif;transform:scaleX(0.9400);transform-origin:left top;">21</div>
<div class="t" style="left:752.60px;top:376.00px;font-size:7.3px;line-height:7.3px;font-weight:normal;font-style:normal;color:#000;font-family:'Liberation Sans',sans-serif;transform:scaleX(0.9400);transform-origin:left top;-webkit-text-stroke:0.12px #000;">State or province</div>
<div class="t" style="left:884.60px;top:376.00px;font-size:7.3px;line-height:7.3px;font-weight:bold;font-style:normal;color:#000;font-family:'Liberation Sans',sans-serif;transform:scaleX(0.9400);transform-origin:left top;">22</div>
<div class="t" style="left:900.00px;top:376.00px;font-size:7.3px;line-height:7.3px;font-weight:normal;font-style:normal;color:#000;font-family:'Liberation Sans',sans-serif;transform:scaleX(0.9400);transform-origin:left top;-webkit-text-stroke:0.12px #000;">Country and ZIP or foreign postal code</div>
<div style="left:599.85px;top:373.60px;width:1.10px;height:10.40px;background:#000;"></div>
<div style="left:599.85px;top:384.00px;width:1.10px;height:13.20px;background:#8d93b4;"></div>
<div style="left:733.85px;top:373.60px;width:1.10px;height:10.40px;background:#000;"></div>
<div style="left:733.85px;top:384.00px;width:1.10px;height:13.20px;background:#8d93b4;"></div>
<div style="left:880.85px;top:373.60px;width:1.10px;height:10.40px;background:#000;"></div>
<div style="left:880.85px;top:384.00px;width:1.10px;height:13.20px;background:#8d93b4;"></div>
<div class="t" style="left:355.70px;top:384.88px;font-size:10.5px;line-height:10.5px;font-weight:normal;font-style:normal;color:#1a1a2a;font-family:'Liberation Sans',sans-serif;transform:scaleX(0.9361);transform-origin:left top;">975 Alder Lane Suite 312</div>
<div class="t" style="left:601.90px;top:384.88px;font-size:10.5px;line-height:10.5px;font-weight:normal;font-style:normal;color:#1a1a2a;font-family:'Liberation Sans',sans-serif;transform:scaleX(0.9671);transform-origin:left top;">New York</div>
<div class="t" style="left:735.60px;top:384.88px;font-size:10.5px;line-height:10.5px;font-weight:normal;font-style:normal;color:#1a1a2a;font-family:'Liberation Sans',sans-serif;transform:scaleX(0.9456);transform-origin:left top;">NY</div>
<div class="t" style="left:883.70px;top:384.88px;font-size:10.5px;line-height:10.5px;font-weight:normal;font-style:normal;color:#1a1a2a;font-family:'Liberation Sans',sans-serif;transform:scaleX(0.9503);transform-origin:left top;">USA 10023</div>
<div style="left:353.40px;top:396.70px;width:704.90px;height:1.20px;background:#000;"></div>
<div style="left:353.40px;top:397.30px;width:36.20px;height:12.20px;background:#000;"></div>
<div class="t" style="left:357.70px;top:398.69px;font-size:9.9px;line-height:9.9px;font-weight:bold;font-style:normal;color:#fff;font-family:'Liberation Sans',sans-serif;-webkit-text-stroke:0.3px #fff;">Part IV</div>
<div class="t" style="left:403.90px;top:398.57px;font-size:9.68px;line-height:9.68px;font-weight:bold;font-style:normal;color:#000;font-family:'Liberation Sans',sans-serif;">Covered Individuals <span style="font-weight:normal">(Enter the information for each covered individual(s).)</span></div>
<div style="left:353.40px;top:408.90px;width:704.90px;height:1.20px;background:#000;"></div>
<div style="left:529.75px;top:409.50px;width:1.10px;height:34.70px;background:#000;"></div>
<div style="left:613.95px;top:409.50px;width:1.10px;height:34.70px;background:#000;"></div>
<div style="left:684.05px;top:409.50px;width:1.10px;height:34.70px;background:#000;"></div>
<div style="left:719.65px;top:409.50px;width:1.10px;height:23.10px;background:#000;"></div>
<div class="t" style="left:391.80px;top:416.78px;font-size:6.85px;line-height:6.85px;font-weight:normal;font-style:normal;color:#000;font-family:'Liberation Sans',sans-serif;"><b>(a)</b> Name of covered individual(s)</div>
<div class="t" style="left:560.30px;top:416.91px;font-size:6.69px;line-height:6.69px;font-weight:normal;font-style:normal;color:#000;font-family:'Liberation Sans',sans-serif;"><b>(b)</b> SSN</div>
<div class="t" style="left:618.60px;top:417.20px;font-size:6.35px;line-height:6.35px;font-weight:normal;font-style:normal;color:#000;font-family:'Liberation Sans',sans-serif;"><b>(c)</b> DOB (If SSN is not</div>
<div class="t" style="left:636.30px;top:425.34px;font-size:6.3px;line-height:6.3px;font-weight:normal;font-style:normal;color:#000;font-family:'Liberation Sans',sans-serif;">available)</div>
<div class="t" style="left:687.20px;top:416.99px;font-size:6.6px;line-height:6.6px;font-weight:normal;font-style:normal;color:#000;font-family:'Liberation Sans',sans-serif;transform:scaleX(0.8800);transform-origin:left top;"><b>(d)</b> Covered</div>
<div class="t" style="left:685.90px;top:425.09px;font-size:6.6px;line-height:6.6px;font-weight:normal;font-style:normal;color:#000;font-family:'Liberation Sans',sans-serif;transform:scaleX(0.8400);transform-origin:left top;">all 12 months</div>
<div class="t" style="left:855.00px;top:416.70px;font-size:6.59px;line-height:6.59px;font-weight:normal;font-style:normal;color:#000;font-family:'Liberation Sans',sans-serif;"><b>(e)</b> Months of coverage</div>
<div style="left:719.50px;top:432.00px;width:338.80px;height:1.20px;background:#000;"></div>
<div class="t" style="left:434.00px;width:600px;text-align:center;top:435.84px;font-size:8.3px;line-height:8.3px;font-weight:normal;font-style:normal;color:#000;font-family:'Liberation Sans',sans-serif;transform:scaleX(0.9100);transform-origin:center top;">Jan</div>
<div class="t" style="left:462.55px;width:600px;text-align:center;top:435.84px;font-size:8.3px;line-height:8.3px;font-weight:normal;font-style:normal;color:#000;font-family:'Liberation Sans',sans-serif;transform:scaleX(0.9100);transform-origin:center top;">Feb</div>
<div class="t" style="left:490.60px;width:600px;text-align:center;top:435.84px;font-size:8.3px;line-height:8.3px;font-weight:normal;font-style:normal;color:#000;font-family:'Liberation Sans',sans-serif;transform:scaleX(0.9100);transform-origin:center top;">Mar</div>
<div class="t" style="left:518.55px;width:600px;text-align:center;top:435.84px;font-size:8.3px;line-height:8.3px;font-weight:normal;font-style:normal;color:#000;font-family:'Liberation Sans',sans-serif;transform:scaleX(0.9100);transform-origin:center top;">Apr</div>
<div class="t" style="left:546.55px;width:600px;text-align:center;top:435.84px;font-size:8.3px;line-height:8.3px;font-weight:normal;font-style:normal;color:#000;font-family:'Liberation Sans',sans-serif;transform:scaleX(0.9100);transform-origin:center top;">May</div>
<div class="t" style="left:574.60px;width:600px;text-align:center;top:435.84px;font-size:8.3px;line-height:8.3px;font-weight:normal;font-style:normal;color:#000;font-family:'Liberation Sans',sans-serif;transform:scaleX(0.9100);transform-origin:center top;">Jun</div>
<div class="t" style="left:602.75px;width:600px;text-align:center;top:435.84px;font-size:8.3px;line-height:8.3px;font-weight:normal;font-style:normal;color:#000;font-family:'Liberation Sans',sans-serif;transform:scaleX(0.9100);transform-origin:center top;">Jul</div>
<div class="t" style="left:631.05px;width:600px;text-align:center;top:435.84px;font-size:8.3px;line-height:8.3px;font-weight:normal;font-style:normal;color:#000;font-family:'Liberation Sans',sans-serif;transform:scaleX(0.9100);transform-origin:center top;">Aug</div>
<div class="t" style="left:659.40px;width:600px;text-align:center;top:435.84px;font-size:8.3px;line-height:8.3px;font-weight:normal;font-style:normal;color:#000;font-family:'Liberation Sans',sans-serif;transform:scaleX(0.9100);transform-origin:center top;">Sep</div>
<div class="t" style="left:687.75px;width:600px;text-align:center;top:435.84px;font-size:8.3px;line-height:8.3px;font-weight:normal;font-style:normal;color:#000;font-family:'Liberation Sans',sans-serif;transform:scaleX(0.9100);transform-origin:center top;">Oct</div>
<div class="t" style="left:715.90px;width:600px;text-align:center;top:435.84px;font-size:8.3px;line-height:8.3px;font-weight:normal;font-style:normal;color:#000;font-family:'Liberation Sans',sans-serif;transform:scaleX(0.9100);transform-origin:center top;">Nov</div>
<div class="t" style="left:744.10px;width:600px;text-align:center;top:435.84px;font-size:8.3px;line-height:8.3px;font-weight:normal;font-style:normal;color:#000;font-family:'Liberation Sans',sans-serif;transform:scaleX(0.9100);transform-origin:center top;">Dec</div>
<div style="left:353.40px;top:443.60px;width:704.90px;height:1.20px;background:#000;"></div>
<div style="left:718.95px;top:432.60px;width:1.10px;height:222.90px;background:#000;"></div>
<div style="left:747.95px;top:432.60px;width:1.10px;height:222.90px;background:#000;"></div>
<div style="left:776.05px;top:432.60px;width:1.10px;height:222.90px;background:#000;"></div>
<div style="left:804.05px;top:432.60px;width:1.10px;height:222.90px;background:#000;"></div>
<div style="left:831.95px;top:432.60px;width:1.10px;height:222.90px;background:#000;"></div>
<div style="left:860.05px;top:432.60px;width:1.10px;height:222.90px;background:#000;"></div>
<div style="left:888.05px;top:432.60px;width:1.10px;height:222.90px;background:#000;"></div>
<div style="left:916.35px;top:432.60px;width:1.10px;height:222.90px;background:#000;"></div>
<div style="left:944.65px;top:432.60px;width:1.10px;height:222.90px;background:#000;"></div>
<div style="left:973.05px;top:432.60px;width:1.10px;height:222.90px;background:#000;"></div>
<div style="left:1001.35px;top:432.60px;width:1.10px;height:222.90px;background:#000;"></div>
<div style="left:1029.35px;top:432.60px;width:1.10px;height:222.90px;background:#000;"></div>
<div style="left:368.00px;top:456.00px;width:316.60px;height:23.50px;background:#dde3fd;"></div>
<div style="left:529.85px;top:444.20px;width:1.10px;height:11.80px;background:#000;"></div>
<div style="left:529.85px;top:456.00px;width:1.10px;height:23.50px;background:#8d93b4;"></div>
<div style="left:613.85px;top:444.20px;width:1.10px;height:11.80px;background:#000;"></div>
<div style="left:613.85px;top:456.00px;width:1.10px;height:23.50px;background:#8d93b4;"></div>
<div style="left:684.05px;top:444.20px;width:1.10px;height:11.80px;background:#000;"></div>
<div style="left:684.05px;top:456.00px;width:1.10px;height:23.50px;background:#8d93b4;"></div>
<div style="left:353.80px;top:478.90px;width:14.20px;height:1.20px;background:#000;"></div>
<div style="left:368.00px;top:478.90px;width:316.60px;height:1.20px;background:#8d93b4;"></div>
<div style="left:684.60px;top:478.90px;width:373.70px;height:1.20px;background:#000;"></div>
<div class="t" style="left:357.30px;top:470.20px;font-size:8.0px;line-height:8.0px;font-weight:bold;font-style:normal;color:#000;font-family:'Liberation Sans',sans-serif;transform:scaleX(1.0554);transform-origin:left top;">23</div>
<div style="left:695.20px;top:455.80px;width:13.40px;height:12.90px;background:#dde3fd;border:1.2px solid #8d93b4;border-left-color:#000;border-right-color:#000;"></div>
<div style="left:728.20px;top:455.80px;width:12.80px;height:12.80px;background:#dde3fd;border:1.1px solid #8d93b4;border-right-color:#000;"></div>
<div style="left:756.30px;top:455.80px;width:12.80px;height:12.80px;background:#dde3fd;border:1.1px solid #8d93b4;border-right-color:#000;"></div>
<svg style="position:absolute;left:756.3px;top:455.8px;" width="13" height="13" viewBox="0 0 13 13"><path d="M2.6 2.4 L10.4 10.4 M10.4 2.4 L2.6 10.4" stroke="#000" stroke-width="1.1"/></svg>
<div style="left:784.40px;top:455.80px;width:12.80px;height:12.80px;background:#dde3fd;border:1.1px solid #8d93b4;"></div>
<svg style="position:absolute;left:784.4px;top:455.8px;" width="13" height="13" viewBox="0 0 13 13"><path d="M2.6 2.4 L10.4 10.4 M10.4 2.4 L2.6 10.4" stroke="#000" stroke-width="1.1"/></svg>
<div style="left:812.50px;top:455.80px;width:12.80px;height:12.80px;background:#dde3fd;border:1.1px solid #8d93b4;"></div>
<svg style="position:absolute;left:812.5px;top:455.8px;" width="13" height="13" viewBox="0 0 13 13"><path d="M2.6 2.4 L10.4 10.4 M10.4 2.4 L2.6 10.4" stroke="#000" stroke-width="1.1"/></svg>
<div style="left:840.60px;top:455.80px;width:12.80px;height:12.80px;background:#dde3fd;border:1.1px solid #8d93b4;border-left-color:#000;"></div>
<svg style="position:absolute;left:840.6px;top:455.8px;" width="13" height="13" viewBox="0 0 13 13"><path d="M2.6 2.4 L10.4 10.4 M10.4 2.4 L2.6 10.4" stroke="#000" stroke-width="1.1"/></svg>
<div style="left:868.70px;top:455.80px;width:12.80px;height:12.80px;background:#dde3fd;border:1.1px solid #8d93b4;border-left-color:#000;"></div>
<svg style="position:absolute;left:868.7px;top:455.8px;" width="13" height="13" viewBox="0 0 13 13"><path d="M2.6 2.4 L10.4 10.4 M10.4 2.4 L2.6 10.4" stroke="#000" stroke-width="1.1"/></svg>
<div style="left:896.80px;top:455.80px;width:12.80px;height:12.80px;background:#dde3fd;border:1.1px solid #8d93b4;border-left-color:#000;"></div>
<svg style="position:absolute;left:896.8px;top:455.8px;" width="13" height="13" viewBox="0 0 13 13"><path d="M2.6 2.4 L10.4 10.4 M10.4 2.4 L2.6 10.4" stroke="#000" stroke-width="1.1"/></svg>
<div style="left:924.90px;top:455.80px;width:12.80px;height:12.80px;background:#dde3fd;border:1.1px solid #8d93b4;border-right-color:#000;"></div>
<svg style="position:absolute;left:924.9px;top:455.8px;" width="13" height="13" viewBox="0 0 13 13"><path d="M2.6 2.4 L10.4 10.4 M10.4 2.4 L2.6 10.4" stroke="#000" stroke-width="1.1"/></svg>
<div style="left:953.00px;top:455.80px;width:12.80px;height:12.80px;background:#dde3fd;border:1.1px solid #8d93b4;border-right-color:#000;"></div>
<svg style="position:absolute;left:953.0px;top:455.8px;" width="13" height="13" viewBox="0 0 13 13"><path d="M2.6 2.4 L10.4 10.4 M10.4 2.4 L2.6 10.4" stroke="#000" stroke-width="1.1"/></svg>
<div style="left:981.10px;top:455.80px;width:12.80px;height:12.80px;background:#dde3fd;border:1.1px solid #8d93b4;"></div>
<svg style="position:absolute;left:981.1px;top:455.8px;" width="13" height="13" viewBox="0 0 13 13"><path d="M2.6 2.4 L10.4 10.4 M10.4 2.4 L2.6 10.4" stroke="#000" stroke-width="1.1"/></svg>
<div style="left:1009.20px;top:455.80px;width:12.80px;height:12.80px;background:#dde3fd;border:1.1px solid #8d93b4;"></div>
<svg style="position:absolute;left:1009.2px;top:455.8px;" width="13" height="13" viewBox="0 0 13 13"><path d="M2.6 2.4 L10.4 10.4 M10.4 2.4 L2.6 10.4" stroke="#000" stroke-width="1.1"/></svg>
<div style="left:1037.30px;top:455.80px;width:12.80px;height:12.80px;background:#dde3fd;border:1.1px solid #8d93b4;border-left-color:#000;"></div>
<svg style="position:absolute;left:1037.3px;top:455.8px;" width="13" height="13" viewBox="0 0 13 13"><path d="M2.6 2.4 L10.4 10.4 M10.4 2.4 L2.6 10.4" stroke="#000" stroke-width="1.1"/></svg>
<div style="left:368.00px;top:491.30px;width:316.60px;height:23.40px;background:#dde3fd;"></div>
<div style="left:529.85px;top:479.50px;width:1.10px;height:11.80px;background:#000;"></div>
<div style="left:529.85px;top:491.30px;width:1.10px;height:23.40px;background:#8d93b4;"></div>
<div style="left:613.85px;top:479.50px;width:1.10px;height:11.80px;background:#000;"></div>
<div style="left:613.85px;top:491.30px;width:1.10px;height:23.40px;background:#8d93b4;"></div>
<div style="left:684.05px;top:479.50px;width:1.10px;height:11.80px;background:#000;"></div>
<div style="left:684.05px;top:491.30px;width:1.10px;height:23.40px;background:#8d93b4;"></div>
<div style="left:353.80px;top:514.10px;width:14.20px;height:1.20px;background:#000;"></div>
<div style="left:368.00px;top:514.10px;width:316.60px;height:1.20px;background:#8d93b4;"></div>
<div style="left:684.60px;top:514.10px;width:373.70px;height:1.20px;background:#000;"></div>
<div class="t" style="left:357.30px;top:505.40px;font-size:8.0px;line-height:8.0px;font-weight:bold;font-style:normal;color:#000;font-family:'Liberation Sans',sans-serif;transform:scaleX(1.0554);transform-origin:left top;">24</div>
<div style="left:695.20px;top:491.10px;width:13.40px;height:12.90px;background:#dde3fd;border:1.2px solid #8d93b4;border-left-color:#000;border-right-color:#000;"></div>
<div style="left:728.20px;top:491.10px;width:12.80px;height:12.80px;background:#dde3fd;border:1.1px solid #8d93b4;border-right-color:#000;"></div>
<div style="left:756.30px;top:491.10px;width:12.80px;height:12.80px;background:#dde3fd;border:1.1px solid #8d93b4;border-right-color:#000;"></div>
<div style="left:784.40px;top:491.10px;width:12.80px;height:12.80px;background:#dde3fd;border:1.1px solid #8d93b4;"></div>
<div style="left:812.50px;top:491.10px;width:12.80px;height:12.80px;background:#dde3fd;border:1.1px solid #8d93b4;"></div>
<div style="left:840.60px;top:491.10px;width:12.80px;height:12.80px;background:#dde3fd;border:1.1px solid #8d93b4;border-left-color:#000;"></div>
<div style="left:868.70px;top:491.10px;width:12.80px;height:12.80px;background:#dde3fd;border:1.1px solid #8d93b4;border-left-color:#000;"></div>
<div style="left:896.80px;top:491.10px;width:12.80px;height:12.80px;background:#dde3fd;border:1.1px solid #8d93b4;border-left-color:#000;"></div>
<div style="left:924.90px;top:491.10px;width:12.80px;height:12.80px;background:#dde3fd;border:1.1px solid #8d93b4;border-right-color:#000;"></div>
<div style="left:953.00px;top:491.10px;width:12.80px;height:12.80px;background:#dde3fd;border:1.1px solid #8d93b4;border-right-color:#000;"></div>
<div style="left:981.10px;top:491.10px;width:12.80px;height:12.80px;background:#dde3fd;border:1.1px solid #8d93b4;"></div>
<div style="left:1009.20px;top:491.10px;width:12.80px;height:12.80px;background:#dde3fd;border:1.1px solid #8d93b4;"></div>
<div style="left:1037.30px;top:491.10px;width:12.80px;height:12.80px;background:#dde3fd;border:1.1px solid #8d93b4;border-left-color:#000;"></div>
<div style="left:368.00px;top:526.50px;width:316.60px;height:23.30px;background:#dde3fd;"></div>
<div style="left:529.85px;top:514.70px;width:1.10px;height:11.80px;background:#000;"></div>
<div style="left:529.85px;top:526.50px;width:1.10px;height:23.30px;background:#8d93b4;"></div>
<div style="left:613.85px;top:514.70px;width:1.10px;height:11.80px;background:#000;"></div>
<div style="left:613.85px;top:526.50px;width:1.10px;height:23.30px;background:#8d93b4;"></div>
<div style="left:684.05px;top:514.70px;width:1.10px;height:11.80px;background:#000;"></div>
<div style="left:684.05px;top:526.50px;width:1.10px;height:23.30px;background:#8d93b4;"></div>
<div style="left:353.80px;top:549.20px;width:14.20px;height:1.20px;background:#000;"></div>
<div style="left:368.00px;top:549.20px;width:316.60px;height:1.20px;background:#8d93b4;"></div>
<div style="left:684.60px;top:549.20px;width:373.70px;height:1.20px;background:#000;"></div>
<div class="t" style="left:357.30px;top:540.50px;font-size:8.0px;line-height:8.0px;font-weight:bold;font-style:normal;color:#000;font-family:'Liberation Sans',sans-serif;transform:scaleX(1.0554);transform-origin:left top;">25</div>
<div style="left:695.20px;top:526.30px;width:13.40px;height:12.90px;background:#dde3fd;border:1.2px solid #8d93b4;border-left-color:#000;border-right-color:#000;"></div>
<div style="left:728.20px;top:526.30px;width:12.80px;height:12.80px;background:#dde3fd;border:1.1px solid #8d93b4;border-right-color:#000;"></div>
<div style="left:756.30px;top:526.30px;width:12.80px;height:12.80px;background:#dde3fd;border:1.1px solid #8d93b4;border-right-color:#000;"></div>
<div style="left:784.40px;top:526.30px;width:12.80px;height:12.80px;background:#dde3fd;border:1.1px solid #8d93b4;"></div>
<div style="left:812.50px;top:526.30px;width:12.80px;height:12.80px;background:#dde3fd;border:1.1px solid #8d93b4;"></div>
<div style="left:840.60px;top:526.30px;width:12.80px;height:12.80px;background:#dde3fd;border:1.1px solid #8d93b4;border-left-color:#000;"></div>
<div style="left:868.70px;top:526.30px;width:12.80px;height:12.80px;background:#dde3fd;border:1.1px solid #8d93b4;border-left-color:#000;"></div>
<div style="left:896.80px;top:526.30px;width:12.80px;height:12.80px;background:#dde3fd;border:1.1px solid #8d93b4;border-left-color:#000;"></div>
<div style="left:924.90px;top:526.30px;width:12.80px;height:12.80px;background:#dde3fd;border:1.1px solid #8d93b4;border-right-color:#000;"></div>
<div style="left:953.00px;top:526.30px;width:12.80px;height:12.80px;background:#dde3fd;border:1.1px solid #8d93b4;border-right-color:#000;"></div>
<div style="left:981.10px;top:526.30px;width:12.80px;height:12.80px;background:#dde3fd;border:1.1px solid #8d93b4;"></div>
<div style="left:1009.20px;top:526.30px;width:12.80px;height:12.80px;background:#dde3fd;border:1.1px solid #8d93b4;"></div>
<div style="left:1037.30px;top:526.30px;width:12.80px;height:12.80px;background:#dde3fd;border:1.1px solid #8d93b4;border-left-color:#000;"></div>
<div style="left:368.00px;top:561.60px;width:316.60px;height:23.60px;background:#dde3fd;"></div>
<div style="left:529.85px;top:549.80px;width:1.10px;height:11.80px;background:#000;"></div>
<div style="left:529.85px;top:561.60px;width:1.10px;height:23.60px;background:#8d93b4;"></div>
<div style="left:613.85px;top:549.80px;width:1.10px;height:11.80px;background:#000;"></div>
<div style="left:613.85px;top:561.60px;width:1.10px;height:23.60px;background:#8d93b4;"></div>
<div style="left:684.05px;top:549.80px;width:1.10px;height:11.80px;background:#000;"></div>
<div style="left:684.05px;top:561.60px;width:1.10px;height:23.60px;background:#8d93b4;"></div>
<div style="left:353.80px;top:584.60px;width:14.20px;height:1.20px;background:#000;"></div>
<div style="left:368.00px;top:584.60px;width:316.60px;height:1.20px;background:#8d93b4;"></div>
<div style="left:684.60px;top:584.60px;width:373.70px;height:1.20px;background:#000;"></div>
<div class="t" style="left:357.30px;top:575.90px;font-size:8.0px;line-height:8.0px;font-weight:bold;font-style:normal;color:#000;font-family:'Liberation Sans',sans-serif;transform:scaleX(1.0554);transform-origin:left top;">26</div>
<div style="left:695.20px;top:561.40px;width:13.40px;height:12.90px;background:#dde3fd;border:1.2px solid #8d93b4;border-left-color:#000;border-right-color:#000;"></div>
<div style="left:728.20px;top:561.40px;width:12.80px;height:12.80px;background:#dde3fd;border:1.1px solid #8d93b4;border-right-color:#000;"></div>
<div style="left:756.30px;top:561.40px;width:12.80px;height:12.80px;background:#dde3fd;border:1.1px solid #8d93b4;border-right-color:#000;"></div>
<div style="left:784.40px;top:561.40px;width:12.80px;height:12.80px;background:#dde3fd;border:1.1px solid #8d93b4;"></div>
<div style="left:812.50px;top:561.40px;width:12.80px;height:12.80px;background:#dde3fd;border:1.1px solid #8d93b4;"></div>
<div style="left:840.60px;top:561.40px;width:12.80px;height:12.80px;background:#dde3fd;border:1.1px solid #8d93b4;border-left-color:#000;"></div>
<div style="left:868.70px;top:561.40px;width:12.80px;height:12.80px;background:#dde3fd;border:1.1px solid #8d93b4;border-left-color:#000;"></div>
<div style="left:896.80px;top:561.40px;width:12.80px;height:12.80px;background:#dde3fd;border:1.1px solid #8d93b4;border-left-color:#000;"></div>
<div style="left:924.90px;top:561.40px;width:12.80px;height:12.80px;background:#dde3fd;border:1.1px solid #8d93b4;border-right-color:#000;"></div>
<div style="left:953.00px;top:561.40px;width:12.80px;height:12.80px;background:#dde3fd;border:1.1px solid #8d93b4;border-right-color:#000;"></div>
<div style="left:981.10px;top:561.40px;width:12.80px;height:12.80px;background:#dde3fd;border:1.1px solid #8d93b4;"></div>
<div style="left:1009.20px;top:561.40px;width:12.80px;height:12.80px;background:#dde3fd;border:1.1px solid #8d93b4;"></div>
<div style="left:1037.30px;top:561.40px;width:12.80px;height:12.80px;background:#dde3fd;border:1.1px solid #8d93b4;border-left-color:#000;"></div>
<div style="left:368.00px;top:597.00px;width:316.60px;height:23.40px;background:#dde3fd;"></div>
<div style="left:529.85px;top:585.20px;width:1.10px;height:11.80px;background:#000;"></div>
<div style="left:529.85px;top:597.00px;width:1.10px;height:23.40px;background:#8d93b4;"></div>
<div style="left:613.85px;top:585.20px;width:1.10px;height:11.80px;background:#000;"></div>
<div style="left:613.85px;top:597.00px;width:1.10px;height:23.40px;background:#8d93b4;"></div>
<div style="left:684.05px;top:585.20px;width:1.10px;height:11.80px;background:#000;"></div>
<div style="left:684.05px;top:597.00px;width:1.10px;height:23.40px;background:#8d93b4;"></div>
<div style="left:353.80px;top:619.80px;width:14.20px;height:1.20px;background:#000;"></div>
<div style="left:368.00px;top:619.80px;width:316.60px;height:1.20px;background:#8d93b4;"></div>
<div style="left:684.60px;top:619.80px;width:373.70px;height:1.20px;background:#000;"></div>
<div class="t" style="left:357.30px;top:611.10px;font-size:8.0px;line-height:8.0px;font-weight:bold;font-style:normal;color:#000;font-family:'Liberation Sans',sans-serif;transform:scaleX(1.0554);transform-origin:left top;">27</div>
<div style="left:695.20px;top:596.80px;width:13.40px;height:12.90px;background:#dde3fd;border:1.2px solid #8d93b4;border-left-color:#000;border-right-color:#000;"></div>
<div style="left:728.20px;top:596.80px;width:12.80px;height:12.80px;background:#dde3fd;border:1.1px solid #8d93b4;border-right-color:#000;"></div>
<div style="left:756.30px;top:596.80px;width:12.80px;height:12.80px;background:#dde3fd;border:1.1px solid #8d93b4;border-right-color:#000;"></div>
<div style="left:784.40px;top:596.80px;width:12.80px;height:12.80px;background:#dde3fd;border:1.1px solid #8d93b4;"></div>
<div style="left:812.50px;top:596.80px;width:12.80px;height:12.80px;background:#dde3fd;border:1.1px solid #8d93b4;"></div>
<div style="left:840.60px;top:596.80px;width:12.80px;height:12.80px;background:#dde3fd;border:1.1px solid #8d93b4;border-left-color:#000;"></div>
<div style="left:868.70px;top:596.80px;width:12.80px;height:12.80px;background:#dde3fd;border:1.1px solid #8d93b4;border-left-color:#000;"></div>
<div style="left:896.80px;top:596.80px;width:12.80px;height:12.80px;background:#dde3fd;border:1.1px solid #8d93b4;border-left-color:#000;"></div>
<div style="left:924.90px;top:596.80px;width:12.80px;height:12.80px;background:#dde3fd;border:1.1px solid #8d93b4;border-right-color:#000;"></div>
<div style="left:953.00px;top:596.80px;width:12.80px;height:12.80px;background:#dde3fd;border:1.1px solid #8d93b4;border-right-color:#000;"></div>
<div style="left:981.10px;top:596.80px;width:12.80px;height:12.80px;background:#dde3fd;border:1.1px solid #8d93b4;"></div>
<div style="left:1009.20px;top:596.80px;width:12.80px;height:12.80px;background:#dde3fd;border:1.1px solid #8d93b4;"></div>
<div style="left:1037.30px;top:596.80px;width:12.80px;height:12.80px;background:#dde3fd;border:1.1px solid #8d93b4;border-left-color:#000;"></div>
<div style="left:368.00px;top:632.20px;width:316.60px;height:23.30px;background:#dde3fd;"></div>
<div style="left:529.85px;top:620.40px;width:1.10px;height:11.80px;background:#000;"></div>
<div style="left:529.85px;top:632.20px;width:1.10px;height:23.30px;background:#8d93b4;"></div>
<div style="left:613.85px;top:620.40px;width:1.10px;height:11.80px;background:#000;"></div>
<div style="left:613.85px;top:632.20px;width:1.10px;height:23.30px;background:#8d93b4;"></div>
<div style="left:684.05px;top:620.40px;width:1.10px;height:11.80px;background:#000;"></div>
<div style="left:684.05px;top:632.20px;width:1.10px;height:23.30px;background:#8d93b4;"></div>
<div style="left:353.40px;top:654.85px;width:704.90px;height:1.30px;background:#000;"></div>
<div class="t" style="left:357.30px;top:646.20px;font-size:8.0px;line-height:8.0px;font-weight:bold;font-style:normal;color:#000;font-family:'Liberation Sans',sans-serif;transform:scaleX(1.0554);transform-origin:left top;">28</div>
<div style="left:695.20px;top:632.00px;width:13.40px;height:12.90px;background:#dde3fd;border:1.2px solid #8d93b4;border-left-color:#000;border-right-color:#000;"></div>
<div style="left:728.20px;top:632.00px;width:12.80px;height:12.80px;background:#dde3fd;border:1.1px solid #8d93b4;border-right-color:#000;"></div>
<div style="left:756.30px;top:632.00px;width:12.80px;height:12.80px;background:#dde3fd;border:1.1px solid #8d93b4;border-right-color:#000;"></div>
<div style="left:784.40px;top:632.00px;width:12.80px;height:12.80px;background:#dde3fd;border:1.1px solid #8d93b4;"></div>
<div style="left:812.50px;top:632.00px;width:12.80px;height:12.80px;background:#dde3fd;border:1.1px solid #8d93b4;"></div>
<div style="left:840.60px;top:632.00px;width:12.80px;height:12.80px;background:#dde3fd;border:1.1px solid #8d93b4;border-left-color:#000;"></div>
<div style="left:868.70px;top:632.00px;width:12.80px;height:12.80px;background:#dde3fd;border:1.1px solid #8d93b4;border-left-color:#000;"></div>
<div style="left:896.80px;top:632.00px;width:12.80px;height:12.80px;background:#dde3fd;border:1.1px solid #8d93b4;border-left-color:#000;"></div>
<div style="left:924.90px;top:632.00px;width:12.80px;height:12.80px;background:#dde3fd;border:1.1px solid #8d93b4;border-right-color:#000;"></div>
<div style="left:953.00px;top:632.00px;width:12.80px;height:12.80px;background:#dde3fd;border:1.1px solid #8d93b4;border-right-color:#000;"></div>
<div style="left:981.10px;top:632.00px;width:12.80px;height:12.80px;background:#dde3fd;border:1.1px solid #8d93b4;"></div>
<div style="left:1009.20px;top:632.00px;width:12.80px;height:12.80px;background:#dde3fd;border:1.1px solid #8d93b4;"></div>
<div style="left:1037.30px;top:632.00px;width:12.80px;height:12.80px;background:#dde3fd;border:1.1px solid #8d93b4;border-left-color:#000;"></div>
<div class="t" style="left:369.50px;top:462.77px;font-size:10.5px;line-height:10.5px;font-weight:normal;font-style:normal;color:#1a1a2a;font-family:'Liberation Sans',sans-serif;transform:scaleX(0.9666);transform-origin:left top;">Soutl Soutl</div>
<div class="t" style="left:547.20px;top:462.77px;font-size:10.5px;line-height:10.5px;font-weight:normal;font-style:normal;color:#1a1a2a;font-family:'Liberation Sans',sans-serif;transform:scaleX(0.9322);transform-origin:left top;">000000361</div>
<div class="t" style="left:354.50px;top:659.24px;font-size:7.84px;line-height:7.84px;font-weight:bold;font-style:normal;color:#000;font-family:'Liberation Sans',sans-serif;">For Privacy Act and Paperwork Reduction Act Notice, see separate instructions.</div>
<div class="t" style="left:792.80px;top:659.70px;font-size:6.94px;line-height:6.94px;font-weight:normal;font-style:normal;color:#000;font-family:'Liberation Sans',sans-serif;">Cat. No. 60704B</div>
<div class="t" style="left:987.00px;top:658.29px;font-size:6.6px;line-height:6.6px;font-weight:normal;font-style:normal;color:#000;font-family:'Liberation Sans',sans-serif;transform:scaleX(1.0526);transform-origin:left top;">Form</div>
<div class="t" style="left:1005.20px;top:655.74px;font-size:9.6px;line-height:9.6px;font-weight:bold;font-style:normal;color:#000;font-family:'Liberation Sans',sans-serif;transform:scaleX(1.0232);transform-origin:left top;">1095-B</div>
<div class="t" style="left:1039.00px;top:657.95px;font-size:7.0px;line-height:7.0px;font-weight:normal;font-style:normal;color:#000;font-family:'Liberation Sans',sans-serif;transform:scaleX(0.9637);transform-origin:left top;">(2015)</div>
<div style="left:346.30px;top:294.10px;width:153.50px;height:30.70px;background:transparent;border:4.6px solid #3f47cc;"></div>
<div style="left:920.10px;top:297.20px;width:111.50px;height:26.10px;background:transparent;border:4.6px solid #3f47cc;"></div>
</body></html>
